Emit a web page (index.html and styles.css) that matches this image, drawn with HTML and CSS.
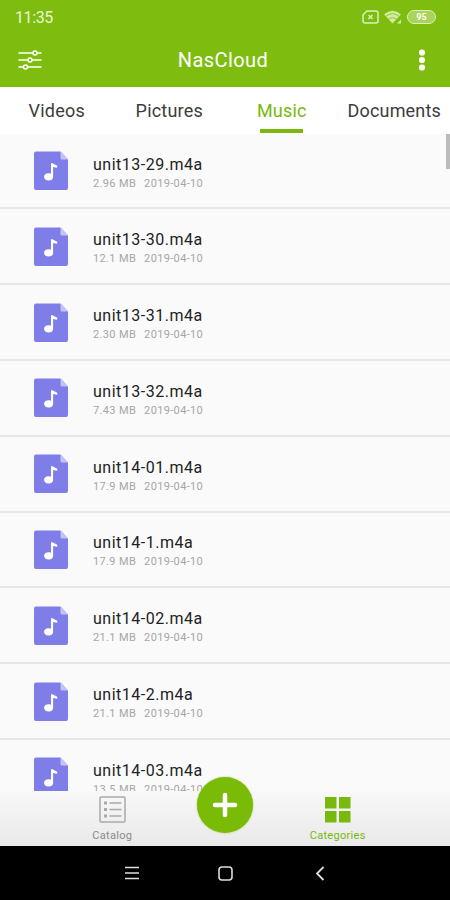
FILE: index.html
```html
<!DOCTYPE html>
<html lang="en">
<head>
  <meta charset="UTF-8">
  <title>NasCloud</title>
  <meta name="viewport" content="width=device-width, initial-scale=1">
  <link rel="stylesheet" href="styles.css">
</head>
<body>
  <svg class="sprite" width="0" height="0">
    <symbol id="music-file" viewBox="0 0 34 39">
      <path d="M2 .5h24.500l7.500 8V37a2 2 0 0 1-2 2H2a2 2 0 0 1-2-2V2.500a2 2 0 0 1 2-2z" fill="#7f7ee9"/>
      <path d="M26.500.5l7.500 8h-6a1.500 1.500 0 0 1-1.500-1.500z" fill="#c3c3f7"/>
      <ellipse cx="14.600" cy="25.800" rx="4.500" ry="3.600" fill="#fff"/>
      <path d="M17 26V12.300h1.500l4.700 2.400v2.100l-4.100-.8V26z" fill="#fff"/>
    </symbol>
  </svg>

  <div class="phone">
    <header class="header">
      <div class="status-bar">
        <span class="clock">11:35</span>
        <div class="status-icons">
          <svg width="17" height="14" viewBox="0 0 17 14" fill="none" stroke="#dcf0b8" stroke-width="1.500">
            <path d="M5 1h9a2 2 0 0 1 2 2v8a2 2 0 0 1-2 2H3a2 2 0 0 1-2-2V5z"/>
            <path d="M6.500 5l4 4M10.500 5l-4 4"/>
          </svg>
          <svg width="18" height="14" viewBox="0 0 18 14">
            <path d="M0 4.200Q8.500-2.800 17 4.200L8.500 13.500z" fill="#d2eba3"/>
            <path d="M2 6.200Q8.500 1.200 15 6.200M4.500 9Q8.500 6 12.500 9" fill="none" stroke="#7ebd10" stroke-width=".8"/>
            <path d="M13 13.500h4v-4z" fill="#d2eba3"/>
          </svg>
          <span class="battery">95</span>
        </div>
      </div>
      <div class="title-bar">
        <svg width="24" height="22" viewBox="0 0 24 22" fill="#7ebd10" stroke="#fff" stroke-width="1.500" stroke-linecap="round">
          <path d="M1 4h22M1 11h22M1 18h22"/>
          <circle cx="17" cy="4" r="2"/>
          <circle cx="12" cy="11" r="2"/>
          <circle cx="7.500" cy="18" r="2"/>
        </svg>
        <h1>NasCloud</h1>
        <svg width="8" height="22" viewBox="0 0 8 22" fill="#fff">
          <circle cx="4" cy="3.500" r="3.100"/>
          <circle cx="4" cy="11" r="3.100"/>
          <circle cx="4" cy="18.500" r="3.100"/>
        </svg>
      </div>
    </header>

    <nav class="tabs">
      <a class="tab">Videos</a>
      <a class="tab">Pictures</a>
      <a class="tab active">Music</a>
      <a class="tab">Documents</a>
    </nav>

    <main class="list">
      <div class="row">
        <svg class="file-icon"><use href="#music-file"/></svg>
        <div class="info"><div class="name">unit13-29.m4a</div><div class="meta"><span>2.96 MB</span><span>2019-04-10</span></div></div>
      </div>
      <div class="row">
        <svg class="file-icon"><use href="#music-file"/></svg>
        <div class="info"><div class="name">unit13-30.m4a</div><div class="meta"><span>12.1 MB</span><span>2019-04-10</span></div></div>
      </div>
      <div class="row">
        <svg class="file-icon"><use href="#music-file"/></svg>
        <div class="info"><div class="name">unit13-31.m4a</div><div class="meta"><span>2.30 MB</span><span>2019-04-10</span></div></div>
      </div>
      <div class="row">
        <svg class="file-icon"><use href="#music-file"/></svg>
        <div class="info"><div class="name">unit13-32.m4a</div><div class="meta"><span>7.43 MB</span><span>2019-04-10</span></div></div>
      </div>
      <div class="row">
        <svg class="file-icon"><use href="#music-file"/></svg>
        <div class="info"><div class="name">unit14-01.m4a</div><div class="meta"><span>17.9 MB</span><span>2019-04-10</span></div></div>
      </div>
      <div class="row">
        <svg class="file-icon"><use href="#music-file"/></svg>
        <div class="info"><div class="name">unit14-1.m4a</div><div class="meta"><span>17.9 MB</span><span>2019-04-10</span></div></div>
      </div>
      <div class="row">
        <svg class="file-icon"><use href="#music-file"/></svg>
        <div class="info"><div class="name">unit14-02.m4a</div><div class="meta"><span>21.1 MB</span><span>2019-04-10</span></div></div>
      </div>
      <div class="row">
        <svg class="file-icon"><use href="#music-file"/></svg>
        <div class="info"><div class="name">unit14-2.m4a</div><div class="meta"><span>21.1 MB</span><span>2019-04-10</span></div></div>
      </div>
      <div class="row">
        <svg class="file-icon"><use href="#music-file"/></svg>
        <div class="info"><div class="name">unit14-03.m4a</div><div class="meta"><span>13.5 MB</span><span>2019-04-10</span></div></div>
      </div>
      <div class="scrollbar"></div>
    </main>

    <footer class="bottom-bar">
      <a class="bottom-item">
        <svg width="27" height="27" viewBox="0 0 27 27" fill="none" stroke="#a9a9a9" stroke-width="1.500">
          <rect x="1" y="1" width="25" height="25" rx="1"/>
          <path d="M10.500 7h12M10.500 13.500h12M10.500 20h12"/>
          <path d="M5 7h3M5 13.500h3M5 20h3" stroke-width="3"/>
        </svg>
        <span>Catalog</span>
      </a>
      <button class="add">
        <svg width="26" height="26" viewBox="0 0 26 26" stroke="#fff" stroke-width="4.500" stroke-linecap="round">
          <path d="M13 3v20M3 13h20"/>
        </svg>
      </button>
      <a class="bottom-item active">
        <svg width="27" height="27" viewBox="0 0 27 27" fill="#79b90c">
          <rect x="1" y="1" width="11.500" height="11.500"/>
          <rect x="15" y="1" width="11.500" height="11.500"/>
          <rect x="1" y="15" width="11.500" height="11.500"/>
          <rect x="15" y="15" width="11.500" height="11.500"/>
        </svg>
        <span>Categories</span>
      </a>
    </footer>

    <div class="system-nav">
      <svg width="14" height="14" viewBox="0 0 14 14" stroke="#ddd" stroke-width="1.600"><path d="M0 1.500h14M0 7h14M0 12.500h14"/></svg>
      <svg width="15" height="15" viewBox="0 0 15 15" fill="none" stroke="#ddd" stroke-width="1.600"><rect x="1" y="1" width="13" height="13" rx="3"/></svg>
      <svg class="back" width="14" height="15" viewBox="0 0 14 15" fill="none" stroke="#ddd" stroke-width="1.800"><path d="M10.500 1L4 7.500l6.500 6.500"/></svg>
    </div>
  </div>
</body>
</html>
```
FILE: styles.css
```css
html, body { margin: 0; padding: 0; }
body { font-family: Roboto, Arial, sans-serif; }
svg { display: block; }
.sprite { position: absolute; }
.phone { width: 450px; height: 900px; display: flex; flex-direction: column; overflow: hidden; }

.header { height: 87px; background: #7ebd10; color: #fff; flex: none; }
.status-bar { display: flex; justify-content: space-between; align-items: center; height: 33px; padding: 0 14px 0 15px; }
.clock { font-size: 16px; letter-spacing: -0.4px; color: #e9f6d2; padding-top: 2px; }
.status-icons { display: flex; align-items: center; gap: 5px; }
.battery {
  box-sizing: border-box;
  width: 29px;
  height: 14px;
  border: 1.5px solid #dcf0b8;
  border-radius: 7px;
  background: #a8d35c;
  font-size: 9px;
  line-height: 12px;
  font-weight: bold;
  text-align: center;
}
.title-bar { display: flex; justify-content: space-between; align-items: center; height: 54px; padding: 0 24px 0 18px; }
.title-bar h1 { margin: 0 0 0 -14px; font-size: 20px; font-weight: 400; letter-spacing: 0.4px; }

.tabs { display: grid; grid-template-columns: repeat(4, 1fr); height: 47px; background: #fff; flex: none; }
.tab { display: flex; flex-direction: column; align-items: center; padding-left: 1px; font-size: 18px; line-height: 48px; letter-spacing: 0.2px; color: #3c3c3c; }
.tab.active { color: #79b90c; }
.tab.active::after { content: ""; width: 43px; height: 4px; margin-top: -6px; background: #79b90c; flex: none; }

.list { position: relative; flex: 1; min-height: 0; overflow: hidden; background: #fafafa; }
.row { display: flex; align-items: center; box-sizing: border-box; height: 75.8px; padding-left: 34px; border-bottom: 2px solid #e6e6e6; }
.row:first-child { margin-top: -0.4px; }
.file-icon { width: 34px; height: 39px; margin-right: 25px; }
.info { padding-top: 6px; }
.name { font-size: 16px; line-height: 20px; letter-spacing: 0.5px; color: #222; }
.meta { display: flex; gap: 8px; font-size: 11px; line-height: 18px; letter-spacing: 0.35px; color: #a6a6a6; }
.scrollbar { position: absolute; top: 0; right: 0; width: 4px; height: 35px; background: #bcbcbc; }

.bottom-bar { display: grid; grid-template-columns: repeat(3, 1fr); justify-items: center; height: 55px; padding: 0 56px; background: linear-gradient(#f8f8f8, #e9e9e9); flex: none; }
.bottom-item { display: flex; flex-direction: column; align-items: center; gap: 6px; padding-top: 5px; font-size: 11px; line-height: 13px; letter-spacing: 0.3px; color: #8b8b8b; }
.bottom-item.active { color: #79b90c; }
.add { position: relative; display: flex; align-items: center; justify-content: center; width: 56px; height: 56px; margin-top: -14px; padding: 0; border: none; border-radius: 50%; background: #7abb08; box-shadow: 0 0 2px #9ac94c; }

.system-nav { display: flex; justify-content: center; align-items: center; gap: 79px; height: 54px; padding-left: 1px; background: #000; flex: none; }
.back { margin-left: 1px; }
```
